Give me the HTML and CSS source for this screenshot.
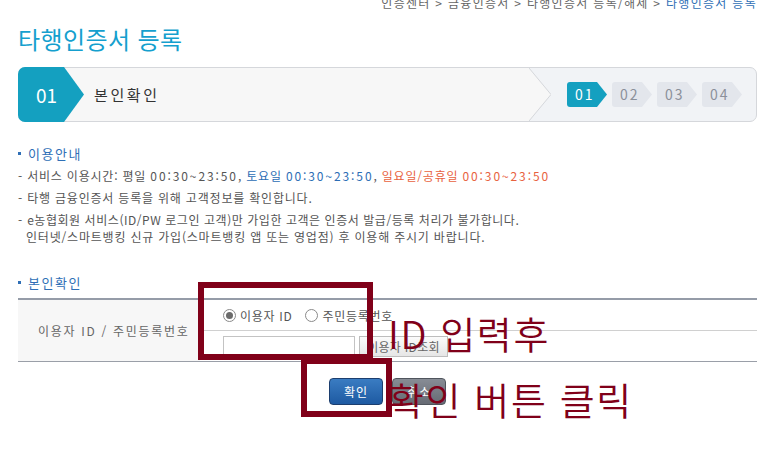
FILE: index.html
```html
<!DOCTYPE html>
<html lang="ko">
<head>
    <meta charset="UTF-8">
    <title>타행인증서 등록</title>
    <link rel="stylesheet" href="styles.css">
</head>
<body>
    <div class="page">
        <div class="breadcrumb">
            인증센터 &gt; 금융인증서 &gt; 타행인증서 등록/해제 &gt; <span class="current">타행인증서 등록</span>
        </div>
        <h1 class="page-title">타행인증서 등록</h1>

        <!-- step bar -->
        <div class="step-bar">
            <div class="step-current">
                <div class="step-badge">01</div>
                <div class="step-label">본인확인</div>
            </div>
            <svg class="step-chevron" width="22" height="53" viewBox="0 0 22 53">
                <polygon points="0,0 22,26.5 0,53" fill="#f7f7f7"/>
                <polyline points="0,0 22,26.5 0,53" fill="none" stroke="#d5d7db" stroke-width="1"/>
            </svg>
            <div class="step-list">
                <span class="step-mini active">01</span>
                <span class="step-mini">02</span>
                <span class="step-mini">03</span>
                <span class="step-mini">04</span>
            </div>
        </div>

        <!-- 이용안내 -->
        <h2 class="section-title">이용안내</h2>
        <ul class="notice">
            <li>서비스 이용시간: 평일 <span class="time">00:30~23:50</span>, <span class="sat">토요일 <span class="time">00:30~23:50</span></span>, <span class="sun">일요일/공휴일 <span class="time">00:30~23:50</span></span></li>
            <li>타행 금융인증서 등록을 위해 고객정보를 확인합니다.</li>
            <li><span class="tight">e농협회원 서비스(ID/PW 로그인 고객)만 가입한 고객은 인증서 발급/등록 처리가 불가합니다.</span><br>인터넷/스마트뱅킹 신규 가입(스마트뱅킹 앱 또는 영업점) 후 이용해 주시기 바랍니다.</li>
        </ul>

        <!-- 본인확인 -->
        <h2 class="section-title second">본인확인</h2>
        <div class="form-table">
            <div class="form-head">이용자 ID / 주민등록번호</div>
            <div class="form-body">
                <div class="form-row">
                    <label class="radio checked"><span class="radio-dot"></span>이용자 ID</label>
                    <label class="radio"><span class="radio-dot"></span>주민등록번호</label>
                </div>
                <div class="form-row second">
                    <input type="text" class="id-input">
                    <button class="lookup-btn">이용자 ID조회</button>
                </div>
            </div>
        </div>

        <div class="actions">
            <button class="btn btn-ok">확인</button>
            <button class="btn btn-cancel">취소</button>
        </div>

        <!-- annotation marks -->
        <div class="mark mark-input"></div>
        <div class="mark mark-ok"></div>
        <div class="mark-text text-input">ID 입력후</div>
        <div class="mark-text text-ok">확인 버튼 클릭</div>
    </div>
</body>
</html>
```

FILE: styles.css
```css
:root {
    --title-color: #159fce;
    --step-blue: #14a0c0;
    --text-color: #555555;
    --link-blue: #2f6fb6;
    --mark-color: #800019;
}

body {
    margin: 0;
    background: #ffffff;
    font-family: "Noto Sans CJK KR", "Noto Sans", sans-serif;
    color: var(--text-color);
    overflow: hidden;
}

.page {
    position: relative;
    padding: 0 11px 0 18px;
    height: 455px;
}

.breadcrumb {
    margin-top: -5px;
    height: 16px;
    line-height: 16px;
    font-size: 12px;
    letter-spacing: 1.3px;
    text-align: right;
    color: #666;
}

.breadcrumb .current {
    color: var(--link-blue);
}

.page-title {
    margin: 12px 0 13px 0;
    font-size: 24px;
    line-height: 31px;
    font-weight: normal;
    letter-spacing: 0.4px;
    color: var(--title-color);
}

.step-bar {
    display: flex;
    height: 55px;
    box-sizing: border-box;
    border: 1px solid #d5d7db;
    border-radius: 7px;
    background: #f1f3f6;
}

.step-current {
    flex: 1;
    display: flex;
    align-items: center;
    background: #f7f7f7;
    border-radius: 6px 0 0 6px;
}

.step-badge {
    width: 66px;
    height: 55px;
    margin: -1px 0 -1px -1px;
    box-sizing: border-box;
    padding-left: 18px;
    line-height: 55px;
    font-size: 19px;
    color: #fff;
    background: var(--step-blue);
    border-radius: 7px 0 0 7px;
    clip-path: polygon(0 0, 46px 0, 66px 50%, 46px 100%, 0 100%);
}

.step-label {
    margin-left: 10px;
    font-size: 15px;
    letter-spacing: 2.6px;
    color: #333;
}

.step-chevron {
    display: block;
    flex: none;
}

.step-list {
    display: flex;
    align-items: center;
    gap: 5px;
    padding: 0 14px 0 16px;
}

.step-mini {
    width: 40px;
    height: 25px;
    box-sizing: border-box;
    padding-left: 8px;
    line-height: 25px;
    font-size: 14px;
    letter-spacing: 2px;
    color: #8b909a;
    background: #e3e6ec;
    border-radius: 3px 0 0 3px;
    clip-path: polygon(0 0, 30px 0, 40px 50%, 30px 100%, 0 100%);
}

.step-mini.active {
    color: #fff;
    background: var(--step-blue);
}

.section-title {
    margin: 22px 0 0;
    padding-left: 10px;
    position: relative;
    font-size: 13px;
    line-height: 20px;
    font-weight: normal;
    letter-spacing: 1.5px;
    color: var(--link-blue);
}

.section-title::before {
    content: '';
    position: absolute;
    left: 0;
    top: 8px;
    width: 3px;
    height: 3px;
    background: var(--link-blue);
}

.section-title.second {
    margin-top: 28px;
    margin-bottom: 5px;
}

.notice {
    list-style: none;
    margin: 3px 0 0;
    padding: 0;
    font-size: 12px;
    line-height: 17px;
    letter-spacing: 0.8px;
}

.notice li {
    padding-left: 8px;
    text-indent: -8px;
    margin-bottom: 5px;
}

.notice li::before {
    content: '- ';
}

.notice .time { letter-spacing: 1.9px; }
.notice .tight { letter-spacing: 0.55px; }
.notice .sat { color: #2c6db5; }
.notice .sun { color: #e8623e; }

.form-table {
    display: flex;
    border-top: 2px solid #959ca8;
    border-bottom: 1px solid #9a9fa8;
}

.form-head {
    width: 182px;
    box-sizing: border-box;
    padding-left: 20px;
    display: flex;
    align-items: center;
    background: #f7f7f7;
    font-size: 12px;
    letter-spacing: 1.7px;
    color: #666;
}

.form-body {
    flex: 1;
}

.form-row {
    height: 30px;
    display: flex;
    align-items: center;
    padding-left: 23px;
}

.form-row.second {
    border-top: 1px solid #d0d0d0;
    align-items: flex-start;
    padding-top: 5px;
    box-sizing: border-box;
    height: 31px;
}

.radio {
    display: flex;
    align-items: center;
    gap: 4px;
    margin-right: 13px;
    font-size: 12px;
    letter-spacing: 0.7px;
    color: #555;
}

.radio-dot {
    width: 11px;
    height: 11px;
    border: 1px solid #8a8a8a;
    border-radius: 50%;
    background: #fff;
    position: relative;
}

.radio.checked .radio-dot::after {
    content: '';
    position: absolute;
    left: 2px;
    top: 2px;
    width: 7px;
    height: 7px;
    border-radius: 50%;
    background: #6b6b6b;
}

.id-input {
    width: 132px;
    height: 21px;
    box-sizing: border-box;
    margin: 0;
    border: 1px solid #c3c3c3;
}

.lookup-btn {
    margin-left: 4px;
    width: 89px;
    height: 21px;
    padding: 0;
    border: 1px solid #bdbdbd;
    background: linear-gradient(#fbfbfb, #e6e6e6);
    font-family: inherit;
    font-size: 12px;
    letter-spacing: 0.3px;
    color: #666;
}

.actions {
    display: flex;
    justify-content: center;
    gap: 9px;
    margin-top: 16px;
}

.btn {
    width: 54px;
    height: 27px;
    padding: 0;
    border-radius: 4px;
    font-family: inherit;
    font-size: 12px;
    letter-spacing: 1px;
    color: #fff;
}

.btn-ok {
    border: 1px solid #1c3e6e;
    background: linear-gradient(#3a7cc2, #1e5aa2);
}

.btn-cancel {
    border: 1px solid #50555d;
    background: linear-gradient(#878c95, #666b74);
}

/* annotation overlay */
.mark {
    position: absolute;
    box-sizing: border-box;
    border: 6px solid var(--mark-color);
}

.mark-input {
    left: 198px;
    top: 287px;
    width: 175px;
    height: 78px;
}

.mark-ok {
    left: 301px;
    top: 363px;
    width: 91px;
    height: 59px;
}

.mark-text {
    position: absolute;
    font-size: 38px;
    line-height: 40px;
    font-weight: 350;
    letter-spacing: 1.6px;
    color: var(--mark-color);
    white-space: nowrap;
}

.text-input {
    left: 388px;
    top: 318px;
}

.text-ok {
    left: 389px;
    top: 384px;
}
```
